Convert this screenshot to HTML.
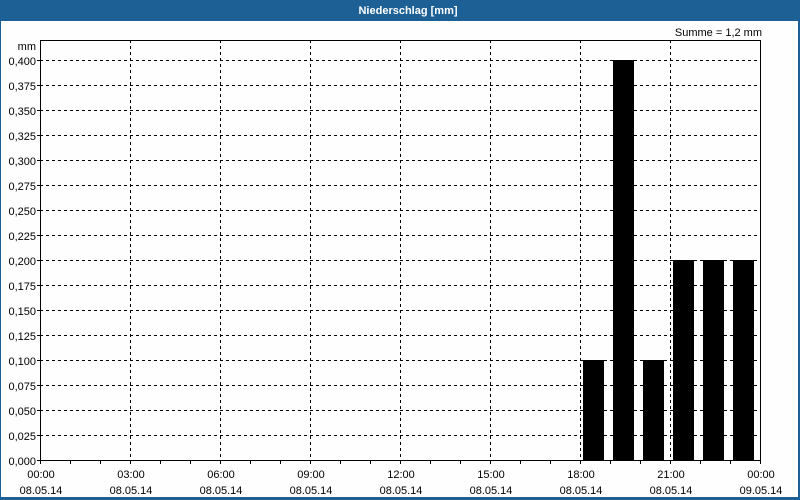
<!DOCTYPE html>
<html><head><meta charset="utf-8"><style>
html,body{margin:0;padding:0;background:#fff}
svg{display:block}
text{font-family:"Liberation Sans",sans-serif;font-size:11px;fill:#000}
</style></head><body>
<svg width="800" height="500" viewBox="0 0 800 500" xmlns="http://www.w3.org/2000/svg">
<rect x="0" y="0" width="800" height="500" fill="#1c6096"/>
<rect x="1" y="21" width="797" height="476" fill="#fdfefd"/>
<text x="408" y="14" text-anchor="middle" style="font-weight:bold;fill:#fff">Niederschlag [mm]</text>
<text x="762" y="36" text-anchor="end">Summe = 1,2 mm</text>
<text x="36" y="50" text-anchor="end">mm</text>
<g stroke="#000" stroke-width="1" stroke-dasharray="3,3" fill="none">
<path d="M40 60.5H760M40 85.5H760M40 110.5H760M40 135.5H760M40 160.5H760M40 185.5H760M40 210.5H760M40 235.5H760M40 260.5H760M40 285.5H760M40 310.5H760M40 335.5H760M40 360.5H760M40 385.5H760M40 410.5H760M40 435.5H760"/>
<path d="M130.5 40V460M220.5 40V460M310.5 40V460M400.5 40V460M490.5 40V460M580.5 40V460M670.5 40V460"/>
</g>
<g fill="#000">
<rect x="583" y="360" width="21" height="100"/>
<rect x="613" y="60" width="21" height="400"/>
<rect x="643" y="360" width="21" height="100"/>
<rect x="673" y="260" width="21" height="200"/>
<rect x="703" y="260" width="21" height="200"/>
<rect x="733" y="260" width="21" height="200"/>
</g>
<rect x="40.5" y="40.5" width="720" height="420" fill="none" stroke="#000" stroke-width="1"/>
<g stroke="#000" stroke-width="1">
<path d="M37 60.5H40M37 85.5H40M37 110.5H40M37 135.5H40M37 160.5H40M37 185.5H40M37 210.5H40M37 235.5H40M37 260.5H40M37 285.5H40M37 310.5H40M37 335.5H40M37 360.5H40M37 385.5H40M37 410.5H40M37 435.5H40M37 460.5H40"/>
<path d="M40.5 460V464M70.5 460V464M100.5 460V464M130.5 460V464M160.5 460V464M190.5 460V464M220.5 460V464M250.5 460V464M280.5 460V464M310.5 460V464M340.5 460V464M370.5 460V464M400.5 460V464M430.5 460V464M460.5 460V464M490.5 460V464M520.5 460V464M550.5 460V464M580.5 460V464M610.5 460V464M640.5 460V464M670.5 460V464M700.5 460V464M730.5 460V464M760.5 460V464"/>
</g>
<g text-anchor="end">
<text x="36" y="65">0,400</text><text x="36" y="90">0,375</text><text x="36" y="115">0,350</text><text x="36" y="140">0,325</text>
<text x="36" y="165">0,300</text><text x="36" y="190">0,275</text><text x="36" y="215">0,250</text><text x="36" y="240">0,225</text>
<text x="36" y="265">0,200</text><text x="36" y="290">0,175</text><text x="36" y="315">0,150</text><text x="36" y="340">0,125</text>
<text x="36" y="365">0,100</text><text x="36" y="390">0,075</text><text x="36" y="415">0,050</text><text x="36" y="440">0,025</text>
<text x="36" y="465">0,000</text>
</g>
<g text-anchor="middle">
<text x="41" y="478">00:00</text><text x="41" y="494">08.05.14</text>
<text x="131" y="478">03:00</text><text x="131" y="494">08.05.14</text>
<text x="221" y="478">06:00</text><text x="221" y="494">08.05.14</text>
<text x="311" y="478">09:00</text><text x="311" y="494">08.05.14</text>
<text x="401" y="478">12:00</text><text x="401" y="494">08.05.14</text>
<text x="491" y="478">15:00</text><text x="491" y="494">08.05.14</text>
<text x="581" y="478">18:00</text><text x="581" y="494">08.05.14</text>
<text x="671" y="478">21:00</text><text x="671" y="494">08.05.14</text>
<text x="761" y="478">00:00</text><text x="761" y="494">09.05.14</text>
</g>
</svg>
</body></html>
